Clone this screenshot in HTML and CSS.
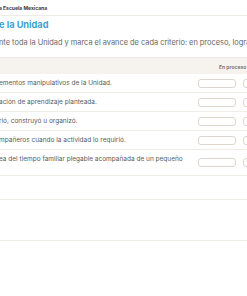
FILE: index.html
```html
<!DOCTYPE html>
<html lang="es">
<head>
  <meta charset="UTF-8" />
  <meta name="viewport" content="width=device-width, initial-scale=1.0"/>
  <title>Lista de cotejo de la Unidad</title>
  <link rel="stylesheet" href="styles.css">
</head>
<body>
  <div class="page">
    <header class="topbar">
      <span class="brand">a Escuela Mexicana</span>
    </header>

    <section class="intro">
      <h1 class="title">e la Unidad</h1>
      <p class="lead">nte toda la Unidad y marca el avance de cada criterio: en proceso, logrado o no logrado.</p>
    </section>

    <div class="checklist">
      <div class="row head">
        <div class="crit"></div>
        <div class="cell">En proceso</div>
        <div class="cell">Logrado</div>
      </div>
      <div class="row">
        <div class="crit">ementos manipulativos de la Unidad.</div>
        <div class="cell"><span class="box"></span></div>
        <div class="cell"><span class="box"></span></div>
      </div>
      <div class="row">
        <div class="crit">ación de aprendizaje planteada.</div>
        <div class="cell"><span class="box"></span></div>
        <div class="cell"><span class="box"></span></div>
      </div>
      <div class="row">
        <div class="crit">rió, construyó u organizó.</div>
        <div class="cell"><span class="box"></span></div>
        <div class="cell"><span class="box"></span></div>
      </div>
      <div class="row">
        <div class="crit">mpañeros cuando la actividad lo requirió.</div>
        <div class="cell"><span class="box"></span></div>
        <div class="cell"><span class="box"></span></div>
      </div>
      <div class="row two-line">
        <div class="crit">ea del tiempo familiar plegable acompañada de un pequeño</div>
        <div class="cell"><span class="box"></span></div>
        <div class="cell"><span class="box"></span></div>
      </div>
    </div>

    <div class="notes"></div>
    <div class="notes tall"></div>
  </div>
</body>
</html>
```

FILE: styles.css
```css
body {
  margin: 0;
  font-family: Inter, "Noto Sans", sans-serif;
  background-color: #ffffff;
  color: #5a5a5a;
  overflow: hidden;
}

.page {
  margin-left: -1px;
  width: 380px;
}

.topbar {
  height: 15px;
  display: flex;
  align-items: center;
  border-bottom: 1px solid #efece6;
}

.brand {
  font-size: 5px;
  font-weight: 700;
  color: #3a3a3a;
}

.title {
  margin: 4px 0 0;
  font-size: 9.2px;
  line-height: 10px;
  font-weight: 700;
  color: #3e9fd2;
}

.lead {
  margin: 8px 0 0;
  font-size: 7.4px;
  line-height: 9px;
  color: #666;
  white-space: nowrap;
}

.checklist {
  margin-top: 10px;
  border-top: 1px solid #eeebe5;
}

.row {
  display: grid;
  grid-template-columns: 199px 45px 45px;
  align-items: center;
  border-bottom: 1px solid #f0ede7;
  font-size: 6.5px;
  line-height: 8px;
}

.row .crit,
.row .cell {
  padding: 4.5px 0;
}

.row.head {
  height: 16px;
  background-color: #f6f3ee;
  border-bottom: none;
}

.row.head .cell {
  padding-left: 21px;
  font-size: 5px;
  font-weight: 700;
  color: #7a7a7a;
  white-space: nowrap;
}

.row.two-line .crit {
  min-height: 16px;
  padding-right: 6px;
}

.box {
  display: block;
  width: 38px;
  height: 9px;
  box-sizing: border-box;
  border: 1px solid #dcd6cc;
  border-radius: 3px;
  background-color: #fff;
}

.notes {
  height: 23px;
  border-bottom: 1px solid #f0ede7;
}

.notes.tall {
  height: 40px;
}
```
